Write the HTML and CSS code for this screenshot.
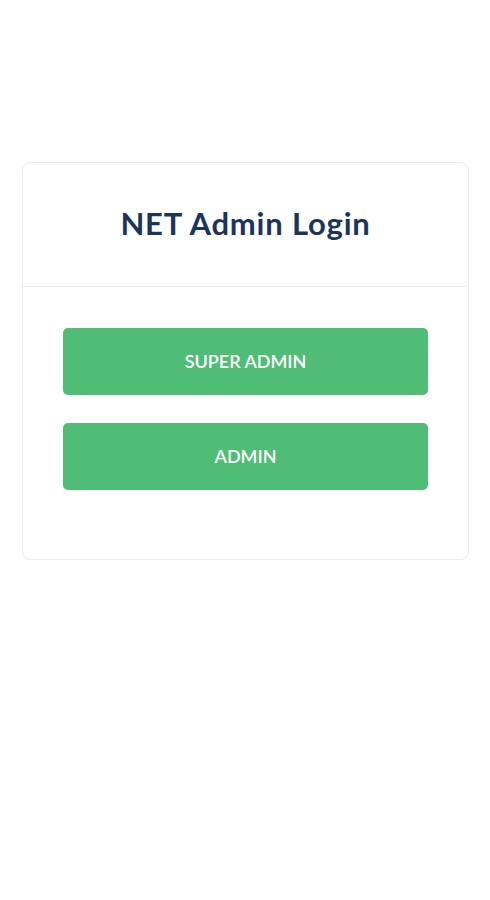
FILE: index.html
```html
<!DOCTYPE html>
<html lang="en">
<head>
<meta charset="utf-8">
<title>NET Admin Login</title>
<link rel="stylesheet" href="styles.css">
</head>
<body>
<main class="page">
  <section class="card">
    <header class="card-header">
      <h1 class="title">NET Admin Login</h1>
    </header>
    <div class="card-body">
      <button class="btn" type="button">SUPER ADMIN</button>
      <button class="btn" type="button">ADMIN</button>
    </div>
  </section>
</main>
</body>
</html>
```
FILE: styles.css
```css
html, body {
  margin: 0;
  padding: 0;
  background: #ffffff;
}
body {
  font-family: Lato, "Open Sans", "Liberation Sans", sans-serif;
}
.page {
  padding: 162px 21px 0 22px;
}
.card {
  background: #ffffff;
  border: 1px solid #ececec;
  border-radius: 9px;
  box-shadow: 0 1px 3px rgba(0,0,0,0.04);
}
.card-header {
  height: 123px;
  display: flex;
  align-items: center;
  justify-content: center;
  border-bottom: 1px solid #ebebeb;
}
.title {
  margin: 0 0 4px 0;
  font-size: 31px;
  font-weight: 700;
  color: #1b355a;
  letter-spacing: 0.8px;
}
.card-body {
  display: flex;
  flex-direction: column;
  gap: 28px;
  padding: 41px 40px 69px 40px;
}
.btn {
  height: 67px;
  border: none;
  border-radius: 5px;
  background: #4fbd76;
  color: #ffffff;
  font-family: Lato, "Open Sans", "Liberation Sans", sans-serif;
  font-size: 18px;
  font-weight: 600;
  padding-bottom: 2px;
}
```
